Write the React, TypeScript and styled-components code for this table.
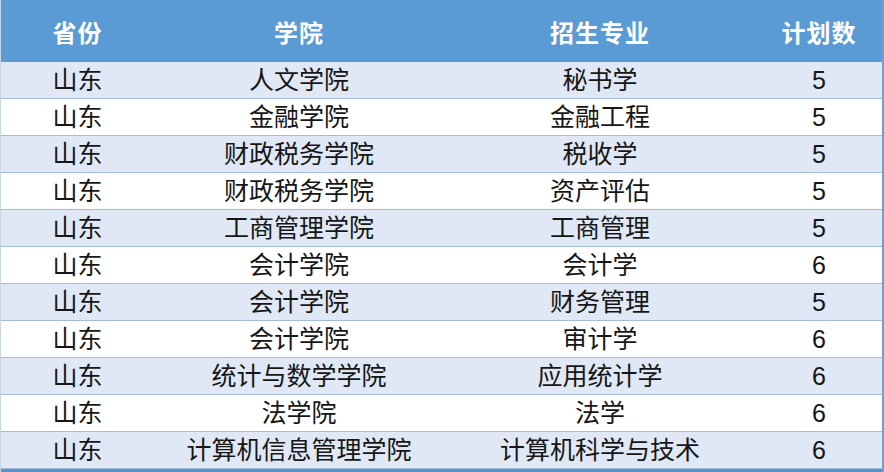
import React from 'react'
import styled, { createGlobalStyle } from 'styled-components'

const rows: [string, string, string, number][] = [
    ['山东', '人文学院', '秘书学', 5],
    ['山东', '金融学院', '金融工程', 5],
    ['山东', '财政税务学院', '税收学', 5],
    ['山东', '财政税务学院', '资产评估', 5],
    ['山东', '工商管理学院', '工商管理', 5],
    ['山东', '会计学院', '会计学', 6],
    ['山东', '会计学院', '财务管理', 5],
    ['山东', '会计学院', '审计学', 6],
    ['山东', '统计与数学学院', '应用统计学', 6],
    ['山东', '法学院', '法学', 6],
    ['山东', '计算机信息管理学院', '计算机科学与技术', 6],
]

const GlobalStyle = createGlobalStyle`
    html, body {
        margin: 0;
        padding: 0;
        background: #ffffff;
    }
    body {
        font-family: "Liberation Sans", "Noto Sans CJK SC", sans-serif;
    }
`

const App = () => {
    return (
        <>
            <GlobalStyle />
            <Table>
                <HeaderRow>
                    <HeaderCell>省份</HeaderCell>
                    <HeaderCell>学院</HeaderCell>
                    <HeaderCell>招生专业</HeaderCell>
                    <HeaderCell>计划数</HeaderCell>
                </HeaderRow>
                {rows.map(([province, college, major, count], i) => (
                    <Row key={i} $shaded={i % 2 === 0}>
                        <Cell>{province}</Cell>
                        <Cell>{college}</Cell>
                        <Cell>{major}</Cell>
                        <Cell>{count}</Cell>
                    </Row>
                ))}
                <BottomBand />
            </Table>
        </>
    )
}

const Table = styled.div`
    width: 884px;
    height: 472px;
    box-sizing: border-box;
    border-right: 2px solid #6f9fd0;
    border-left: 1px solid #c9d6e3;
    display: flex;
    flex-direction: column;
    overflow: hidden;
`

const columns = `grid-template-columns: 153px 290px 312px 1fr;`

const HeaderRow = styled.div`
    display: grid;
    ${columns}
    height: 62px;
    flex: none;
    background: #5b9bd5;
`

const HeaderCell = styled.div`
    display: flex;
    align-items: center;
    justify-content: center;
    color: #ffffff;
    font-family: "Noto Sans CJK SC", sans-serif;
    font-weight: 700;
    font-size: 24px;
    letter-spacing: 1px;
`

const Row = styled.div<{ $shaded: boolean }>`
    display: grid;
    ${columns}
    height: 37px;
    flex: none;
    box-sizing: border-box;
    border-bottom: 1px solid #a3bdd6;
    background: ${p => (p.$shaded ? '#dfe8f4' : '#ffffff')};
    &:last-of-type {
        border-bottom: none;
    }
`

const Cell = styled.div`
    display: flex;
    align-items: center;
    justify-content: center;
    color: #161616;
    font-size: 25px;
    line-height: 1;
`

const BottomBand = styled.div`
    flex: 1;
    background: #5b93c9;
`

export default App
